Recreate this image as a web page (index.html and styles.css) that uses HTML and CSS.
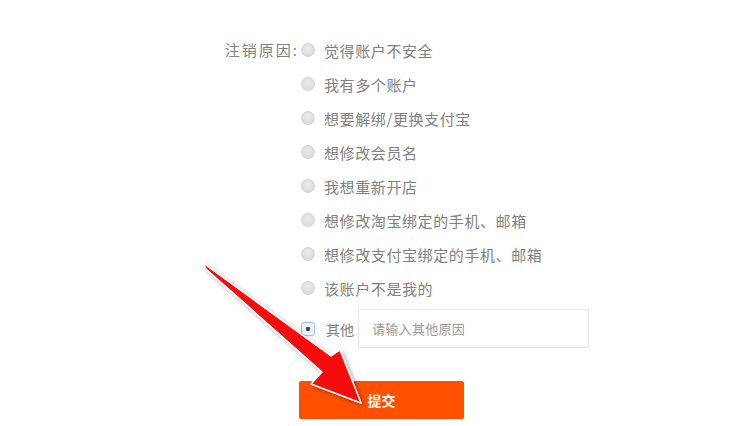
FILE: index.html
```html
<!DOCTYPE html>
<html lang="zh-CN">
<head>
<meta charset="utf-8">
<link rel="stylesheet" href="styles.css">
</head>
<body>
<div class="page">
  <form class="form">
    <div class="label">注销原因<span class="colon">:</span></div>
    <div class="options">
      <div class="opt"><span class="radio"></span><span>觉得账户不安全</span></div>
      <div class="opt"><span class="radio"></span><span>我有多个账户</span></div>
      <div class="opt"><span class="radio"></span><span>想要解绑/更换支付宝</span></div>
      <div class="opt"><span class="radio"></span><span>想修改会员名</span></div>
      <div class="opt"><span class="radio"></span><span>我想重新开店</span></div>
      <div class="opt"><span class="radio"></span><span>想修改淘宝绑定的手机、邮箱</span></div>
      <div class="opt"><span class="radio"></span><span>想修改支付宝绑定的手机、邮箱</span></div>
      <div class="opt"><span class="radio"></span><span>该账户不是我的</span></div>
      <div class="opt other"><span class="radio checked"></span><span class="other-text">其他</span><div class="input">请输入其他原因</div></div>
      <div class="btn">提交</div>
    </div>
  </form>
  <svg class="arrow" width="751" height="426" viewBox="0 0 751 426">
    <defs>
      <filter id="sh" x="-20%" y="-20%" width="140%" height="140%">
        <feDropShadow dx="2" dy="2" stdDeviation="2" flood-color="#000" flood-opacity="0.35"/>
      </filter>
    </defs>
    <polygon points="203,263 331,356 340,350 361,403 311,384 322,372 206,269" fill="#f50808" stroke="#ffffff" stroke-width="1.5" stroke-linejoin="round" filter="url(#sh)"/>
  </svg>
</div>
</body>
</html>
```
FILE: styles.css
```css
html, body {
  margin: 0;
  padding: 0;
  background: #ffffff;
}
.page {
  position: relative;
  width: 751px;
  height: 426px;
  overflow: hidden;
  font-family: "Noto Sans CJK SC", "Noto Sans", sans-serif;
  color: #808080;
}
.form {
  display: flex;
  padding-top: 33px;
  padding-left: 200px;
}
.label {
  width: 97px;
  text-align: right;
  font-size: 15px;
  letter-spacing: 2px;
  line-height: 34px;
  height: 34px;
  padding-right: 3px;
  color: #808080;
}
.colon {
  letter-spacing: 0;
}
.options {
  display: flex;
  flex-direction: column;
}
.opt {
  display: flex;
  align-items: center;
  height: 34px;
  font-size: 15px;
  letter-spacing: 0.6px;
  color: #808080;
}
.radio {
  width: 12px;
  height: 12px;
  border-radius: 50%;
  border: 1px solid #d4d4d4;
  background: radial-gradient(circle at 50% 40%, #ebebeb, #d6d6d6);
  margin-left: 1px;
  margin-right: 9px;
  flex: none;
}
.radio.checked {
  border-radius: 3px;
  border: 1px solid #a9c0e4;
  box-shadow: 0 0 2px #c5d5ef;
  background: radial-gradient(circle, #444 0 2px, #eef2fa 2.5px);
  width: 12px;
  height: 12px;
  margin-right: 11px;
}
.other {
  height: 39px;
  margin-top: 4px;
}
.other-text {
  font-size: 14px;
  letter-spacing: 0;
  margin-right: 4px;
}
.input {
  width: 216px;
  height: 37px;
  border: 1px solid #e6e6e6;
  padding-left: 13px;
  font-size: 13px;
  letter-spacing: 0.3px;
  line-height: 37px;
  color: #999;
}
.btn {
  margin-top: 33px;
  width: 165px;
  height: 38px;
  background: #ff5000;
  border-radius: 2px;
  color: #fff;
  font-size: 14px;
  font-weight: bold;
  text-align: center;
  line-height: 38px;
  margin-left: -1px;
}
.arrow {
  position: absolute;
  left: 0;
  top: 0;
}
```
